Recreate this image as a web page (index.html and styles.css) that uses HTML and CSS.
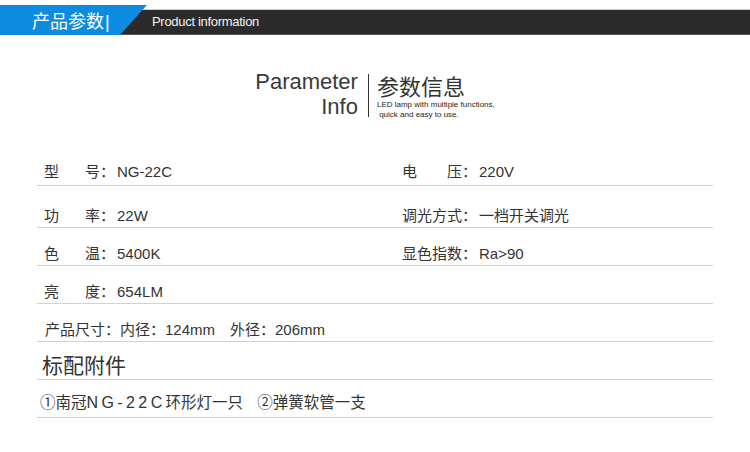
FILE: index.html
```html
<!DOCTYPE html>
<html lang="zh-CN">
<head>
<meta charset="utf-8">
<title>产品参数</title>
<link rel="stylesheet" href="styles.css">
</head>
<body>
<header class="topbar">
  <div class="tab">产品参数<span class="tab-bar">|</span></div>
  <div class="bar">Product information</div>
</header>

<section class="intro">
  <div class="intro-en">Parameter<br>Info</div>
  <div class="intro-sep"></div>
  <div class="intro-cn">
    <div class="intro-title">参数信息</div>
    <div class="intro-sub">LED lamp with multiple functions,<br>&nbsp;quick and easy to use.</div>
  </div>
</section>

<section class="specs">
  <div class="row row-first">
    <div class="cell"><span class="lbl">型 号</span><span class="colon">：</span>NG-22C</div>
    <div class="cell"><span class="lbl lbl-r">电 压</span><span class="colon">：</span>220V</div>
  </div>
  <div class="row row-second">
    <div class="cell"><span class="lbl">功 率</span><span class="colon">：</span>22W</div>
    <div class="cell"><span class="lbl lbl-r">调光方式</span><span class="colon">：</span>一档开关调光</div>
  </div>
  <div class="row">
    <div class="cell"><span class="lbl">色 温</span><span class="colon">：</span>5400K</div>
    <div class="cell"><span class="lbl lbl-r">显色指数</span><span class="colon">：</span>Ra&gt;90</div>
  </div>
  <div class="row">
    <div class="cell"><span class="lbl">亮 度</span><span class="colon">：</span>654LM</div>
    <div class="cell"></div>
  </div>
  <div class="row row-full">产品尺寸：内径：124mm<span class="gap"></span>外径：206mm</div>
  <div class="row row-heading">标配附件</div>
  <div class="row row-acc">①南冠<span class="model">NG-22C</span>环形灯一只<span class="gap gap-acc"></span>②弹簧软管一支</div>
</section>
</body>
</html>
```
FILE: styles.css
```css
* { box-sizing: content-box; }
html, body { margin: 0; padding: 0; background: #fff; }
body {
  font-family: "Liberation Sans", "Noto Sans CJK SC", sans-serif;
  color: #333;
  width: 750px;
}

/* header */
.topbar {
  display: flex;
  align-items: flex-start;
  height: 35px;
}
.tab {
  position: relative;
  z-index: 1;
  flex: 0 0 147px;
  height: 30px;
  margin-top: 5px;
  margin-right: -27px;
  padding-left: 32px;
  box-sizing: border-box;
  background: #0d8be0;
  clip-path: polygon(0 0, 147px 0, 120px 100%, 0 100%);
  color: #fff;
  font-family: "Noto Sans CJK SC", sans-serif;
  font-size: 18px;
  line-height: 30px;
  white-space: nowrap;
}
.tab-bar {
  font-family: "Liberation Sans", sans-serif;
  font-weight: 300;
  margin-left: 1px;
}
.bar {
  flex: 1;
  margin-top: 9px;
  height: 24px;
  border-top: 1px solid #cfcfcf;
  border-bottom: 1px solid #555;
  background: #2b2b2b;
  color: #f2f2f2;
  font-size: 13px;
  letter-spacing: -0.3px;
  line-height: 24px;
  padding-left: 32px;
}

/* intro */
.intro {
  display: flex;
  justify-content: center;
  align-items: flex-start;
  margin-top: 34px;
}
.intro-en {
  text-align: right;
  font-size: 22px;
  line-height: 25px;
  color: #3a3a3a;
}
.intro-sep {
  width: 1px;
  height: 43px;
  margin: 5px 8px 0 10px;
  background: #333;
}
.intro-cn {
  padding-top: 4px;
}
.intro-title {
  font-family: "Noto Sans CJK SC", sans-serif;
  font-size: 22px;
  line-height: 24px;
  color: #333;
}
.intro-sub {
  margin-top: 3px;
  font-size: 8px;
  line-height: 9.5px;
  color: #1e1e1e;
  white-space: nowrap;
}

/* specs */
.specs {
  margin: 31px 37px 0 37px;
}
.row {
  display: grid;
  grid-template-columns: 358px 1fr;
  padding: 16px 0 1px 7px;
  font-size: 15px;
  line-height: 20px;
  border-bottom: 1px solid #d2d2d2;
  white-space: nowrap;
}
.row-first { padding-top: 12px; padding-bottom: 3px; }
.row-second { padding-top: 20px; }
.cell { display: flex; align-items: baseline; }
.lbl {
  display: inline-block;
  width: 56px;
  text-align: justify;
  text-align-last: justify;
}
.lbl-r { width: 60px; }
.colon { margin-right: 2px; }
.gap { display: inline-block; width: 15px; }
.gap-acc { width: 14px; }
.row-full { display: block; padding-left: 8px; }
.row-heading {
  display: block;
  padding: 11px 0 0 5px;
  font-size: 21px;
  line-height: 26px;
}
.row-acc {
  display: block;
  padding: 12px 0 3px 3px;
  font-size: 15.5px;
  line-height: 22px;
}
.model {
  font-size: 16px;
  letter-spacing: 3.4px;
}
```
